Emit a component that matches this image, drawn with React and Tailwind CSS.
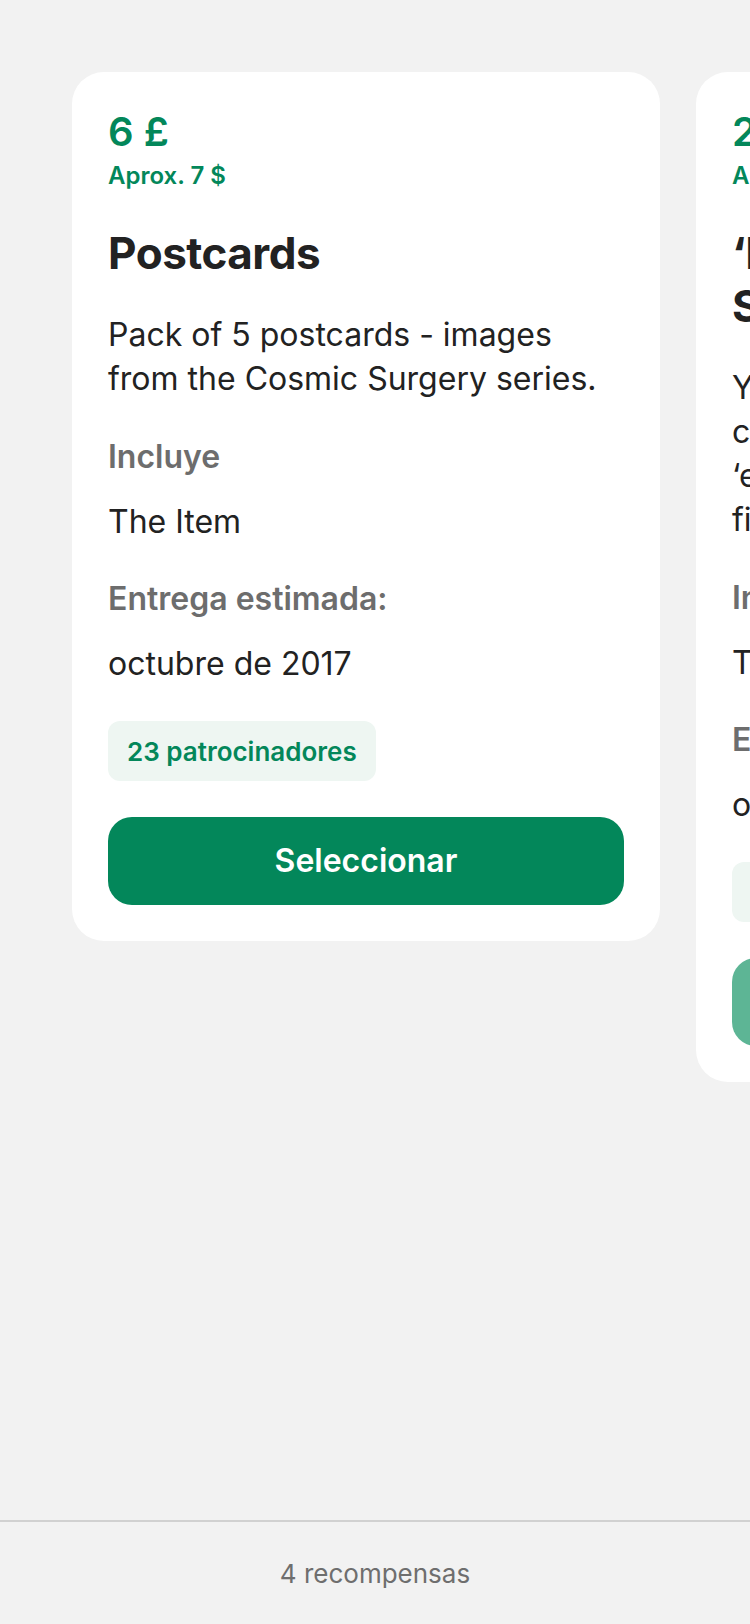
const REWARDS = [
  {
    price: "6 £",
    approx: "Aprox. 7 $",
    title: ["Postcards"],
    body: ["Pack of 5 postcards - images", "from the Cosmic Surgery series."],
    includes: "The Item",
    delivery: "octubre de 2017",
    backers: "23 patrocinadores",
    disabled: false,
  },
  {
    price: "25 £",
    approx: "Aprox. 31 $",
    title: ["‘Inside the Body’", "Signed Print"],
    body: [
      "You will receive a signed",
      "copy of the limited",
      "‘edition’ print from the",
      "first Cosmic Surgery show.",
    ],
    includes: "The Item",
    delivery: "octubre de 2017",
    backers: "12 patrocinadores",
    disabled: true,
  },
];

function RewardCard({ reward }) {
  return (
    <div className="w-[588px] shrink-0 bg-white rounded-[32px] px-[36px] pt-[36px] pb-[36px] flex flex-col">
      <p className="text-[40px] leading-[48px] font-semibold text-[#03875a] whitespace-nowrap">
        {reward.price}
      </p>
      <p className="mt-[6px] text-[24px] leading-[28px] font-semibold text-[#03875a] whitespace-nowrap">
        {reward.approx}
      </p>
      <h2 className="mt-[37px] text-[44px] leading-[53px] font-bold text-[#222222] tracking-[-0.5px]">
        {reward.title.map((line, i) => (
          <span key={i} className="block whitespace-nowrap">
            {line}
          </span>
        ))}
      </h2>
      <p className="mt-[33px] text-[32px] leading-[44px] text-[#222222]">
        {reward.body.map((line, i) => (
          <span key={i} className="block whitespace-nowrap">
            {line}
          </span>
        ))}
      </p>
      <p className="mt-[37px] text-[32px] leading-[38px] font-semibold text-[#6d6d6d]">
        Incluye
      </p>
      <p className="mt-[27px] text-[32px] leading-[38px] text-[#222222]">
        {reward.includes}
      </p>
      <p className="mt-[39px] text-[32px] leading-[38px] font-semibold text-[#6d6d6d]">
        Entrega estimada:
      </p>
      <p className="mt-[27px] text-[32px] leading-[38px] text-[#222222]">
        {reward.delivery}
      </p>
      <div className="mt-[38px] self-start h-[60px] px-[19px] rounded-[12px] bg-[#eef6f2] flex items-center">
        <span className="text-[26px] font-semibold text-[#03875a] whitespace-nowrap">
          {reward.backers}
        </span>
      </div>
      <button
        className={`mt-[36px] h-[88px] w-full rounded-[24px] text-white text-[32px] font-semibold ${
          reward.disabled ? "bg-[#5db595]" : "bg-[#03875a]"
        }`}
      >
        Seleccionar
      </button>
    </div>
  );
}

export default function App() {
  return (
    <div
      className="h-[1624px] w-[750px] bg-[#f2f2f2] flex flex-col overflow-hidden"
      style={{ fontFamily: "Inter, 'Noto Sans', sans-serif" }}
    >
      {/* Rewards carousel */}
      <div className="flex-1 overflow-hidden">
        <div className="flex items-start gap-[36px] pl-[72px] pt-[72px]">
          {REWARDS.map((r, i) => (
            <RewardCard key={i} reward={r} />
          ))}
        </div>
      </div>

      {/* Footer */}
      <div className="h-[104px] border-t-2 border-[#d1d1d1] flex items-center justify-center">
        <span className="text-[26px] text-[#6e6e6e]">4 recompensas</span>
      </div>
    </div>
  );
}
